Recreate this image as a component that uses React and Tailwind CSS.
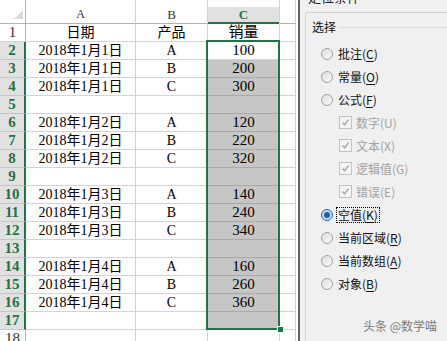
import React from "react";

const SHEET_FONT = { fontFamily: '"Liberation Serif", "Noto Sans CJK SC", serif' };
const UI_FONT = { fontFamily: '"Noto Sans CJK SC", "Noto Sans", sans-serif' };

const rows = [
  { n: 1, a: "日期", b: "产品", c: "销量" },
  { n: 2, a: "2018年1月1日", b: "A", c: "100" },
  { n: 3, a: "2018年1月1日", b: "B", c: "200" },
  { n: 4, a: "2018年1月1日", b: "C", c: "300" },
  { n: 5, a: "", b: "", c: "" },
  { n: 6, a: "2018年1月2日", b: "A", c: "120" },
  { n: 7, a: "2018年1月2日", b: "B", c: "220" },
  { n: 8, a: "2018年1月2日", b: "C", c: "320" },
  { n: 9, a: "", b: "", c: "" },
  { n: 10, a: "2018年1月3日", b: "A", c: "140" },
  { n: 11, a: "2018年1月3日", b: "B", c: "240" },
  { n: 12, a: "2018年1月3日", b: "C", c: "340" },
  { n: 13, a: "", b: "", c: "" },
  { n: 14, a: "2018年1月4日", b: "A", c: "160" },
  { n: 15, a: "2018年1月4日", b: "B", c: "260" },
  { n: 16, a: "2018年1月4日", b: "C", c: "360" },
  { n: 17, a: "", b: "", c: "" },
  { n: 18, a: "", b: "", c: "" },
];

function Sheet() {
  return (
    <div className="relative w-[298px] shrink-0 bg-white" style={SHEET_FONT}>
      <div className="grid grid-cols-[26px_110px_72px_72px_16px_2px]">
        {/* header row */}
        <div className="relative h-[24px] border-r border-b border-[#b4b4b4]">
          <svg className="absolute left-[14px] top-[10px]" width="9" height="9" viewBox="0 0 9 9">
            <polygon points="9,0 9,9 0,9" fill="#dcdcdc" />
          </svg>
        </div>
        <div className="h-[24px] border-r border-b border-[#d4d4d4] border-b-[#b4b4b4] flex items-end justify-center pb-[1px] text-[12px] leading-[15px] text-[#333]">
          A
        </div>
        <div className="h-[24px] border-r border-b border-[#d4d4d4] border-b-[#b4b4b4] flex items-end justify-center pb-[1px] text-[13px] leading-[15px] text-[#333]">
          B
        </div>
        <div className="h-[24px] border-r border-[#d4d4d4] flex flex-col">
          <div className="mt-[7px] flex-1 bg-[#e1e1e1] border-b-2 border-[#217346] flex items-center justify-center text-[13px] leading-[14px] font-bold text-[#217346]">
            C
          </div>
        </div>
        <div className="h-[24px] border-r border-b border-[#d4d4d4] border-b-[#b4b4b4]" />
        <div className="h-[24px]" />

        {rows.map((r) => {
          const sel = r.n >= 2 && r.n <= 17;
          const gray = r.n >= 3 && r.n <= 17;
          return (
            <React.Fragment key={r.n}>
              <div
                className={
                  sel
                    ? "h-[18px] bg-[#e1e1e1] border-b border-[#c6c6c6] border-r-2 border-r-[#217346] flex items-center justify-center text-[15px] font-bold text-[#217346] leading-none"
                    : "h-[18px] bg-white border-b border-r border-[#d4d4d4] border-r-[#b4b4b4] flex items-center justify-center text-[15px] text-[#333] leading-none"
                }
              >
                {r.n}
              </div>
              <div className="h-[18px] border-r border-b border-[#d4d4d4] flex items-center justify-center text-[14px] leading-none text-black whitespace-nowrap">
                {r.a}
              </div>
              <div className="h-[18px] border-r border-b border-[#d4d4d4] flex items-center justify-center text-[14px] leading-none text-black">
                {r.b}
              </div>
              <div
                className={
                  gray
                    ? "h-[18px] bg-[#c6c6c6] border-r border-b border-[#a9a9a9] flex items-center justify-center text-[15px] leading-none text-black"
                    : "h-[18px] bg-white border-r border-b border-[#d4d4d4] flex items-center justify-center text-[15px] leading-none text-black"
                }
              >
                {r.c}
              </div>
              <div className="h-[18px] border-r border-b border-[#d4d4d4]" />
              <div className="h-[18px]" />
            </React.Fragment>
          );
        })}
      </div>

      {/* selection box */}
      <div className="absolute left-[206px] top-[40px] w-[74px] h-[290px] border-2 border-[#217346]">
        <div className="absolute left-[69px] top-[284px] w-[7px] h-[7px] bg-[#217346] border border-white" />
      </div>
    </div>
  );
}

function Radio({ checked }) {
  if (checked) {
    return (
      <div className="w-[12px] h-[12px] rounded-full border border-[#2d6aa6] bg-[#bfe0f8] flex items-center justify-center shrink-0">
        <div className="w-[6px] h-[6px] rounded-full bg-[#1a5fb0]" />
      </div>
    );
  }
  return (
    <div className="w-[12px] h-[12px] rounded-full border border-[#a2a2a2] bg-linear-to-br from-[#dcdcdc] to-[#fbfbfb] shrink-0" />
  );
}

function Check() {
  return (
    <div className="w-[13px] h-[13px] border border-[#c2c2c2] bg-[#f4f4f4] flex items-center justify-center shrink-0">
      <svg width="9" height="9" viewBox="0 0 9 9">
        <path d="M1.5 4.6 L3.6 6.8 L7.6 1.6" fill="none" stroke="#a9a9a9" strokeWidth="1.5" />
      </svg>
    </div>
  );
}

function Label({ text, k, disabled, focus }) {
  const color = disabled ? "text-[#a3a3a3]" : "text-[#111]";
  return (
    <span
      className={
        focus
          ? "border border-dotted border-black px-[1px] text-[12px] leading-[14px] whitespace-nowrap " + color
          : "text-[12px] leading-[14px] whitespace-nowrap " + color
      }
    >
      {text}(<span className={disabled ? "" : "underline underline-offset-2"}>{k}</span>)
    </span>
  );
}

function Dialog() {
  const radiosTop = [
    { t: "批注", k: "C" },
    { t: "常量", k: "O" },
    { t: "公式", k: "F" },
  ];
  const checks = [
    { t: "数字", k: "U" },
    { t: "文本", k: "X" },
    { t: "逻辑值", k: "G" },
    { t: "错误", k: "E" },
  ];
  const radiosBottom = [
    { t: "当前区域", k: "R" },
    { t: "当前数组", k: "A" },
    { t: "对象", k: "B" },
  ];
  return (
    <div className="relative flex-1 bg-[#f0f0f0] border-l-2 border-[#646464] flex flex-col overflow-hidden" style={UI_FONT}>
      <div className="h-[12px] overflow-hidden pl-[8px]">
        <div className="-mt-[11px] text-[13px] leading-[15px] text-[#222]">定位条件</div>
      </div>
      <div className="ml-[5px] flex-1 border-t border-l border-[#d3d3d3] rounded-tl-[3px] flex flex-col">
        <div className="pt-[7px] pl-[6px] flex items-center">
          <span className="text-[12px] leading-[14px] text-[#111]">选择</span>
          <div className="ml-[4px] flex-1 h-px bg-[#dcdcdc]" />
        </div>
        <div className="mt-[8px] flex flex-col">
          {radiosTop.map((r) => (
            <div key={r.k} className="h-[23px] flex items-center pl-[15px] gap-[5px]">
              <Radio />
              <Label text={r.t} k={r.k} />
            </div>
          ))}
          {checks.map((r) => (
            <div key={r.k} className="h-[23px] flex items-center pl-[33px] gap-[4px]">
              <Check />
              <Label text={r.t} k={r.k} disabled />
            </div>
          ))}
          <div className="h-[23px] flex items-center pl-[15px] gap-[3px]">
            <Radio checked />
            <Label text="空值" k="K" focus />
          </div>
          {radiosBottom.map((r) => (
            <div key={r.k} className="h-[23px] flex items-center pl-[15px] gap-[5px]">
              <Radio />
              <Label text={r.t} k={r.k} />
            </div>
          ))}
        </div>
      </div>
      <div className="absolute right-[10px] bottom-[8px] text-[12px] leading-[14px] text-[#7c7c7c]">
        头条 @数学喵
      </div>
    </div>
  );
}

export default function App() {
  return (
    <div className="w-[447px] h-[341px] overflow-hidden flex bg-white">
      <Sheet />
      <Dialog />
    </div>
  );
}
